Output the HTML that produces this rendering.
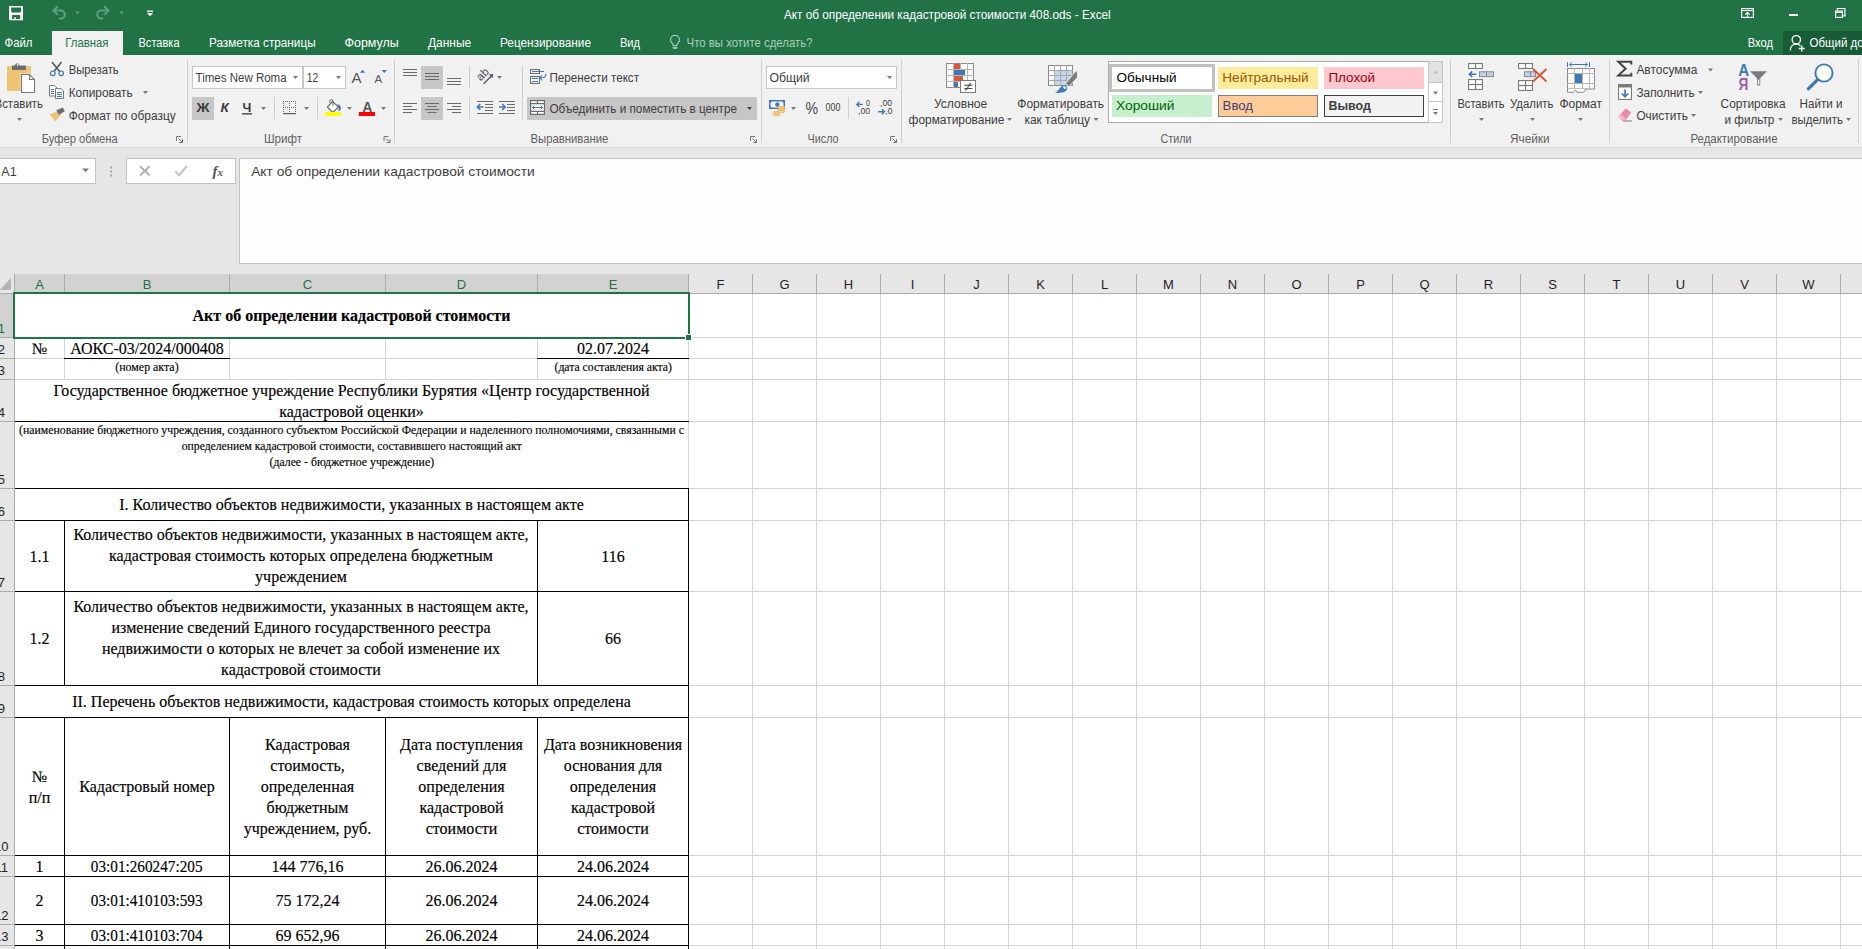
<!DOCTYPE html>
<html><head><meta charset="utf-8"><title>Excel</title>
<style>
html,body{margin:0;padding:0;background:#e6e6e6;}
body{width:1862px;height:949px;overflow:hidden;position:relative;font-family:"Liberation Sans",sans-serif;}
.c{font-family:"Liberation Serif",serif;color:#000;overflow:visible;-webkit-text-stroke:0.15px #000;}
svg{position:absolute;left:0;top:0;}
svg text{white-space:pre;}
</style></head><body>
<svg width="1862" height="949" viewBox="0 0 1862 949">
<rect x="0" y="0" width="1862" height="55" fill="#217346" />
<rect x="52" y="31" width="71" height="24" fill="#f1f1f1" />
<rect x="1783" y="31" width="80" height="24" fill="#185c37" />
<path d="M9 6.6a.6 .6 0 0 1 .6-.6h12.8a.6 .6 0 0 1 .6 .6v13.1a.6 .6 0 0 1 -.6 .6h-12.8a.6 .6 0 0 1 -.6-.6z" fill="#ffffff" />
<path d="M11.2 7.4h9.8v4l-1 1.1h-7.8l-1-1.1z" fill="#217346" />
<rect x="12.2" y="15" width="8" height="4" fill="#217346" />
<rect x="14.3" y="17.2" width="1.5" height="1.8" fill="#ffffff" />
<path d="M53.5 10.6 h7.3 a4 4 0 0 1 0 8 h-1.2" fill="none" stroke="#5e9f7c" stroke-width="2" stroke-linecap="round"/>
<path d="M57.3 6.8 l-3.9 3.8 l3.9 3.8" fill="none" stroke="#5e9f7c" stroke-width="2" stroke-linecap="round" stroke-linejoin="round"/>
<path d="M75 11.5h5l-2.5 3z" fill="#5e9f7c" />
<path d="M108.5 10.6 h-7.3 a4 4 0 0 0 0 8 h1.2" fill="none" stroke="#5e9f7c" stroke-width="2" stroke-linecap="round"/>
<path d="M104.7 6.8 l3.9 3.8 l-3.9 3.8" fill="none" stroke="#5e9f7c" stroke-width="2" stroke-linecap="round" stroke-linejoin="round"/>
<path d="M119 11.5h5l-2.5 3z" fill="#5e9f7c" />
<rect x="147" y="10.5" width="6" height="1.3" fill="#ffffff" />
<path d="M146.8 13 h6.4 l-3.2 3.2z" fill="#ffffff" />
<text x="783.9" y="19" font-family="Liberation Sans" font-size="12" fill="#ffffff" textLength="326.8" lengthAdjust="spacingAndGlyphs">Акт об определении кадастровой стоимости 408.ods - Excel</text>
<rect x="1741.6" y="8.6" width="11.8" height="8.8" fill="none" stroke="#ffffff" stroke-width="1.2" />
<path d="M1741.5 10.6h12" fill="none" stroke="#ffffff" stroke-width="1" />
<path d="M1747.5 17v-4.5 M1745.3 14.5l2.2-2.2l2.2 2.2" fill="none" stroke="#ffffff" stroke-width="1.1" />
<rect x="1789" y="14" width="9" height="2" fill="#ffffff" />
<rect x="1835.6" y="11.1" width="6.8" height="6.3" fill="none" stroke="#ffffff" stroke-width="1.2" />
<path d="M1837.3 10.5v-2h7.6v7.3h-2" fill="none" stroke="#ffffff" stroke-width="1.2" />
<path d="M1835.5 12.4h7" fill="none" stroke="#ffffff" stroke-width="1" />
<text x="4.5" y="47" font-family="Liberation Sans" font-size="12" fill="#ffffff" textLength="28" lengthAdjust="spacingAndGlyphs">Файл</text>
<text x="65.3" y="47" font-family="Liberation Sans" font-size="12" fill="#217346" textLength="43.2" lengthAdjust="spacingAndGlyphs">Главная</text>
<text x="138.5" y="47" font-family="Liberation Sans" font-size="12" fill="#ffffff" textLength="41.1" lengthAdjust="spacingAndGlyphs">Вставка</text>
<text x="209" y="47" font-family="Liberation Sans" font-size="12" fill="#ffffff" textLength="106.6" lengthAdjust="spacingAndGlyphs">Разметка страницы</text>
<text x="344.6" y="47" font-family="Liberation Sans" font-size="12" fill="#ffffff" textLength="54" lengthAdjust="spacingAndGlyphs">Формулы</text>
<text x="427.9" y="47" font-family="Liberation Sans" font-size="12" fill="#ffffff" textLength="43.3" lengthAdjust="spacingAndGlyphs">Данные</text>
<text x="500" y="47" font-family="Liberation Sans" font-size="12" fill="#ffffff" textLength="91" lengthAdjust="spacingAndGlyphs">Рецензирование</text>
<text x="620" y="47" font-family="Liberation Sans" font-size="12" fill="#ffffff" textLength="20" lengthAdjust="spacingAndGlyphs">Вид</text>
<path d="M675 35.4a4.5 4.5 0 0 1 4.5 4.5c0 2.2-2.7 3.4-2.7 5.7h-3.6c0-2.3-2.7-3.5-2.7-5.7a4.5 4.5 0 0 1 4.5-4.5z" fill="none" stroke="#9fc8b1" stroke-width="1.2" />
<path d="M672.4 47h5.2l-.8 2h-3.6z" fill="#9fc8b1" />
<text x="686.6" y="47" font-family="Liberation Sans" font-size="12" fill="#a9cfba" textLength="125.9" lengthAdjust="spacingAndGlyphs">Что вы хотите сделать?</text>
<text x="1747.7" y="47" font-family="Liberation Sans" font-size="12" fill="#ffffff" textLength="25.2" lengthAdjust="spacingAndGlyphs">Вход</text>
<circle cx="1796.3" cy="39.8" r="4.2" fill="none" stroke="#fff" stroke-width="1.3"/>
<path d="M1790.3 50.5c0-4 2.6-6.3 6-6.3c1.7 0 3.2 .6 4.2 1.6" fill="none" stroke="#ffffff" stroke-width="1.3" />
<path d="M1801.8 45.5v6 M1798.8 48.5h6" fill="none" stroke="#ffffff" stroke-width="1.3" />
<text x="1809.6" y="47" font-family="Liberation Sans" font-size="12" fill="#ffffff" textLength="77.0" lengthAdjust="spacingAndGlyphs">Общий доступ</text>
<rect x="0" y="55" width="1862" height="92" fill="#f1f1f1" />
<rect x="0" y="147" width="1862" height="1" fill="#d6d6d6" />
<rect x="187" y="59" width="1" height="84" fill="#d0d0d0" />
<rect x="394" y="59" width="1" height="84" fill="#d0d0d0" />
<rect x="522" y="66" width="1" height="54" fill="#d0d0d0" />
<rect x="761" y="59" width="1" height="84" fill="#d0d0d0" />
<rect x="901" y="59" width="1" height="84" fill="#d0d0d0" />
<rect x="1450" y="59" width="1" height="84" fill="#d0d0d0" />
<rect x="1609" y="59" width="1" height="84" fill="#d0d0d0" />
<rect x="1858" y="59" width="1" height="84" fill="#d0d0d0" />
<rect x="7" y="66" width="24" height="25" fill="#ecc476" />
<path d="M12 70v-4.4h3a2.2 2.2 0 0 1 4.4 0h6.4v4.4z" fill="#6e6e6e" />
<path d="M12 66h4v-1a1.6 1.6 0 0 1 3.2 0v1h6.6v4h-13.8z" fill="#6e6e6e" />
<circle cx="17.6" cy="65" r="0.9" fill="#f1f1f1"/>
<path d="M20.5 73.5h9.5l5.5 5.5v14.5h-15z" fill="#f1f1f1" />
<path d="M21.5 74.5h8l5 5v13h-13z" fill="#ffffff" stroke="#7a7a7a" stroke-width="1.1" />
<path d="M29.5 74.5v5h5" fill="none" stroke="#7a7a7a" stroke-width="1.1" />
<text x="-5.5" y="108" font-family="Liberation Sans" font-size="12" fill="#3d3d3d" textLength="48.5" lengthAdjust="spacingAndGlyphs">Вставить</text>
<path d="M17 118h5l-2.5 3z" fill="#777777" />
<path d="M52 62l9.5 12 M61.5 62l-9.5 12" fill="none" stroke="#555" stroke-width="1.5" />
<circle cx="52.8" cy="73.3" r="2.3" fill="#f1f1f1" stroke="#3e78b8" stroke-width="1.2"/>
<circle cx="61.2" cy="73.3" r="2.3" fill="#f1f1f1" stroke="#3e78b8" stroke-width="1.2"/>
<text x="68.7" y="74" font-family="Liberation Sans" font-size="12" fill="#3d3d3d" textLength="50" lengthAdjust="spacingAndGlyphs">Вырезать</text>
<path d="M49.5 85.5h5l2.5 2.5v8h-7.5z" fill="#fff" stroke="#777" stroke-width="1" />
<path d="M55.5 88.5h5.5l2.5 2.5v7.5h-8z" fill="#fff" stroke="#777" stroke-width="1" />
<rect x="51" y="89" width="3" height="1" fill="#3e78b8" />
<rect x="51" y="91" width="3" height="1" fill="#3e78b8" />
<rect x="51" y="93" width="3" height="1" fill="#3e78b8" />
<rect x="57" y="92" width="5" height="1" fill="#3e78b8" />
<rect x="57" y="94" width="5" height="1" fill="#3e78b8" />
<rect x="57" y="96" width="5" height="1" fill="#3e78b8" />
<text x="68.7" y="97" font-family="Liberation Sans" font-size="12" fill="#3d3d3d" textLength="64" lengthAdjust="spacingAndGlyphs">Копировать</text>
<path d="M143 91h5l-2.5 3z" fill="#777777" />
<path d="M49.5 114.5l8.5-3.5l3 3.5l-5.5 7z" fill="#ecc476" />
<path d="M56.3 110.2l6.5-2.7l2 3.7l-5.8 3.6z" fill="#6e6e6e" />
<text x="68.7" y="120" font-family="Liberation Sans" font-size="12" fill="#3d3d3d" textLength="107" lengthAdjust="spacingAndGlyphs">Формат по образцу</text>
<text x="41.7" y="143" font-family="Liberation Sans" font-size="12" fill="#5f5f5f" textLength="76" lengthAdjust="spacingAndGlyphs">Буфер обмена</text>
<path d="M176.5 141v-4.5h4.5" fill="none" stroke="#777" stroke-width="1" />
<path d="M178.5 138.5l4 4 M182.5 139.2v3.3h-3.3" fill="none" stroke="#777" stroke-width="1" />
<rect x="192.5" y="66.5" width="110" height="22" fill="#fff" stroke="#c6c6c6" stroke-width="1" />
<rect x="303.5" y="66.5" width="42" height="22" fill="#fff" stroke="#c6c6c6" stroke-width="1" />
<text x="195.6" y="82" font-family="Liberation Sans" font-size="12" fill="#3d3d3d" textLength="91" lengthAdjust="spacingAndGlyphs">Times New Roma</text>
<path d="M293 76h5l-2.5 3z" fill="#777777" />
<text x="306.7" y="82" font-family="Liberation Sans" font-size="12" fill="#3d3d3d" textLength="11.5" lengthAdjust="spacingAndGlyphs">12</text>
<path d="M336 76h5l-2.5 3z" fill="#777777" />
<text x="351.6" y="83" font-family="Liberation Sans" font-size="14.5" fill="#555" textLength="10" lengthAdjust="spacingAndGlyphs">A</text>
<path d="M359.8 72.7l2.7-2.9l2.7 2.9z" fill="#3e78b8" />
<text x="374.6" y="83" font-family="Liberation Sans" font-size="11" fill="#555" textLength="7.6" lengthAdjust="spacingAndGlyphs">A</text>
<path d="M381.6 70l2.7 2.9l2.7-2.9z" fill="#3e78b8" />
<rect x="192" y="97" width="22" height="23" fill="#c6c6c6" />
<text x="196.6" y="112" font-family="Liberation Sans" font-size="13" fill="#3b3b3b" font-weight="bold" textLength="13" lengthAdjust="spacingAndGlyphs">Ж</text>
<text x="220.4" y="112" font-family="Liberation Sans" font-size="13" fill="#3b3b3b" font-weight="bold" font-style="italic" textLength="8.3" lengthAdjust="spacingAndGlyphs">К</text>
<text x="242.6" y="112" font-family="Liberation Sans" font-size="13" fill="#3b3b3b" font-weight="bold" textLength="8.8" lengthAdjust="spacingAndGlyphs">Ч</text>
<rect x="242" y="113.2" width="10" height="1.3" fill="#3b3b3b" />
<path d="M261 107h5l-2.5 3z" fill="#777777" />
<rect x="274" y="97" width="1" height="22" fill="#d0d0d0" />
<line x1="283.5" y1="101" x2="283.5" y2="112" stroke="#666" stroke-width="1" stroke-dasharray="1 1"/>
<line x1="289.5" y1="101" x2="289.5" y2="112" stroke="#666" stroke-width="1" stroke-dasharray="1 1"/>
<line x1="295.5" y1="101" x2="295.5" y2="112" stroke="#666" stroke-width="1" stroke-dasharray="1 1"/>
<line x1="283" y1="101.5" x2="296" y2="101.5" stroke="#666" stroke-width="1" stroke-dasharray="1 1"/>
<line x1="283" y1="107.5" x2="296" y2="107.5" stroke="#666" stroke-width="1" stroke-dasharray="1 1"/>
<rect x="283" y="113" width="13" height="1.2" fill="#5a5a5a" />
<path d="M304 107h5l-2.5 3z" fill="#777777" />
<rect x="317" y="97" width="1" height="22" fill="#d0d0d0" />
<path d="M337 103.9c2.8 .7 4.3 2.7 3.9 4.8c-.3 1.4-1.4 2.3-2.6 2.5c.9-2.2 .5-4.6-1.3-7.3z" fill="#3e78b8" />
<path d="M332.7 101.6l5.7 5.4l-5.7 5.4l-5.4-5.4z" fill="#fff" stroke="#666" stroke-width="1.1" />
<path d="M333 106.2v-5a1.6 1.6 0 0 0 -3.2 0v1.9" fill="none" stroke="#666" stroke-width="1" />
<rect x="325" y="112" width="16" height="4" fill="#ffff00" />
<path d="M347 107h5l-2.5 3z" fill="#777777" />
<text x="362.4" y="112" font-family="Liberation Sans" font-size="14" fill="#555" font-weight="bold" textLength="9.8" lengthAdjust="spacingAndGlyphs">A</text>
<rect x="359" y="112" width="16" height="4" fill="#ff0000" />
<path d="M381 107h5l-2.5 3z" fill="#777777" />
<text x="263.9" y="143" font-family="Liberation Sans" font-size="12" fill="#5f5f5f" textLength="38.1" lengthAdjust="spacingAndGlyphs">Шрифт</text>
<path d="M384.0 141v-4.5h4.5" fill="none" stroke="#777" stroke-width="1" />
<path d="M386.0 138.5l4 4 M390.0 139.2v3.3h-3.3" fill="none" stroke="#777" stroke-width="1" />
<rect x="403" y="69" width="14" height="1" fill="#6a6a6a" />
<rect x="403" y="72" width="14" height="1" fill="#6a6a6a" />
<rect x="403" y="75" width="14" height="1" fill="#6a6a6a" />
<rect x="421" y="66" width="22" height="23" fill="#c6c6c6" />
<rect x="425" y="73" width="14" height="1" fill="#6a6a6a" />
<rect x="425" y="76" width="14" height="1" fill="#6a6a6a" />
<rect x="425" y="79" width="14" height="1" fill="#6a6a6a" />
<rect x="447" y="78" width="14" height="1" fill="#6a6a6a" />
<rect x="447" y="81" width="14" height="1" fill="#6a6a6a" />
<rect x="447" y="84" width="14" height="1" fill="#6a6a6a" />
<rect x="469" y="66" width="1" height="22" fill="#d0d0d0" />
<text transform="translate(480.8,81.6) rotate(-45)" font-family="Liberation Sans" font-size="11.5" fill="#4a4a4a">ab</text>
<path d="M483.6 83.8l8.3-8.3" fill="none" stroke="#555" stroke-width="1.3" />
<path d="M493.2 74l-4.3 .6l3.7 3.7z" fill="#555" />
<path d="M497 76h5l-2.5 3z" fill="#777777" />
<rect x="530.55" y="69.55" width="8.9" height="3.9" fill="#fff" stroke="#6e6e6e" stroke-width="1.1" />
<rect x="530.55" y="76.55" width="8.9" height="6.9" fill="#fff" stroke="#6e6e6e" stroke-width="1.1" />
<rect x="532" y="71" width="12" height="1" fill="#3e78b8" />
<rect x="532" y="78" width="6" height="1" fill="#3e78b8" />
<rect x="532" y="81" width="6" height="1" fill="#3e78b8" />
<path d="M545.8 73.6c.4 2.6-1 4.2-3.6 4.2h-2 M542.2 75.3l-2.6 2.5l2.6 2.5" fill="none" stroke="#3e78b8" stroke-width="1.1" />
<text x="549.5" y="82" font-family="Liberation Sans" font-size="12" fill="#3d3d3d" textLength="89.5" lengthAdjust="spacingAndGlyphs">Перенести текст</text>
<rect x="403" y="103" width="14" height="1" fill="#6a6a6a" />
<rect x="403" y="106" width="9" height="1" fill="#6a6a6a" />
<rect x="403" y="109" width="14" height="1" fill="#6a6a6a" />
<rect x="403" y="112" width="9" height="1" fill="#6a6a6a" />
<rect x="421" y="97" width="22" height="23" fill="#c6c6c6" />
<rect x="425.0" y="103" width="14" height="1" fill="#6a6a6a" />
<rect x="427.5" y="106" width="9" height="1" fill="#6a6a6a" />
<rect x="425.0" y="109" width="14" height="1" fill="#6a6a6a" />
<rect x="427.5" y="112" width="9" height="1" fill="#6a6a6a" />
<rect x="447" y="103" width="14" height="1" fill="#6a6a6a" />
<rect x="452" y="106" width="9" height="1" fill="#6a6a6a" />
<rect x="447" y="109" width="14" height="1" fill="#6a6a6a" />
<rect x="452" y="112" width="9" height="1" fill="#6a6a6a" />
<rect x="469" y="97" width="1" height="22" fill="#d0d0d0" />
<rect x="477" y="101" width="16" height="1" fill="#6a6a6a" />
<rect x="477" y="113" width="16" height="1" fill="#6a6a6a" />
<rect x="485" y="104" width="8" height="1" fill="#6a6a6a" />
<rect x="485" y="107" width="8" height="1" fill="#6a6a6a" />
<rect x="485" y="110" width="8" height="1" fill="#6a6a6a" />
<path d="M483.5 107h-6 M480.3 104l-3 3l3 3" fill="none" stroke="#3e78b8" stroke-width="1.6" />
<rect x="499" y="101" width="16" height="1" fill="#6a6a6a" />
<rect x="499" y="113" width="16" height="1" fill="#6a6a6a" />
<rect x="507" y="104" width="8" height="1" fill="#6a6a6a" />
<rect x="507" y="107" width="8" height="1" fill="#6a6a6a" />
<rect x="507" y="110" width="8" height="1" fill="#6a6a6a" />
<path d="M499 107h6 M502.2 104l3 3l-3 3" fill="none" stroke="#3e78b8" stroke-width="1.6" />
<rect x="527" y="97" width="230" height="23" fill="#c6c6c6" />
<rect x="530.6" y="100.6" width="13.8" height="13.8" fill="#fff" stroke="#6a6a6a" stroke-width="1.2" />
<path d="M530.5 103.6h14 M530.5 111.4h14 M537.5 100.5v3 M537.5 111.5v3" fill="none" stroke="#6a6a6a" stroke-width="1.1" />
<path d="M532.5 107.5h10 M534.3 105.8l-1.8 1.7l1.8 1.7 M540.7 105.8l1.8 1.7l-1.8 1.7" fill="none" stroke="#3e78b8" stroke-width="1" />
<text x="549.5" y="113" font-family="Liberation Sans" font-size="12" fill="#3d3d3d" textLength="187.5" lengthAdjust="spacingAndGlyphs">Объединить и поместить в центре</text>
<path d="M747 107h5l-2.5 3z" fill="#444" />
<text x="530.6" y="143" font-family="Liberation Sans" font-size="12" fill="#5f5f5f" textLength="77.7" lengthAdjust="spacingAndGlyphs">Выравнивание</text>
<path d="M750.5 141v-4.5h4.5" fill="none" stroke="#777" stroke-width="1" />
<path d="M752.5 138.5l4 4 M756.5 139.2v3.3h-3.3" fill="none" stroke="#777" stroke-width="1" />
<rect x="766.5" y="66.5" width="130" height="22" fill="#fff" stroke="#c6c6c6" stroke-width="1" />
<text x="769.5" y="82" font-family="Liberation Sans" font-size="12" fill="#3d3d3d" textLength="40.2" lengthAdjust="spacingAndGlyphs">Общий</text>
<path d="M887 76h5l-2.5 3z" fill="#777777" />
<rect x="769" y="100" width="16" height="9" fill="#3e78b8" />
<rect x="770.5" y="101.5" width="13" height="6" fill="#fff" />
<circle cx="777.3" cy="104.5" r="2.2" fill="#3e78b8"/>
<rect x="769" y="100" width="2.5" height="2.5" fill="#3e78b8" />
<rect x="782.5" y="100" width="2.5" height="2.5" fill="#3e78b8" />
<rect x="769" y="106.5" width="2.5" height="2.5" fill="#3e78b8" />
<ellipse cx="781.4" cy="107.3" rx="3.6" ry="1.3" fill="#f3cf8a" stroke="#e0a94f" stroke-width="0.6"/>
<ellipse cx="781.4" cy="109.3" rx="3.6" ry="1.3" fill="#f3cf8a" stroke="#e0a94f" stroke-width="0.6"/>
<ellipse cx="781.4" cy="111.3" rx="3.6" ry="1.3" fill="#f3cf8a" stroke="#e0a94f" stroke-width="0.6"/>
<ellipse cx="776.6" cy="112.6" rx="3.6" ry="1.3" fill="#f3cf8a" stroke="#e0a94f" stroke-width="0.6"/>
<ellipse cx="776.6" cy="114.6" rx="3.6" ry="1.3" fill="#f3cf8a" stroke="#e0a94f" stroke-width="0.6"/>
<path d="M791 107h5l-2.5 3z" fill="#777777" />
<text x="805.4" y="114.2" font-family="Liberation Sans" font-size="16.5" fill="#4a4a4a" textLength="12.6" lengthAdjust="spacingAndGlyphs">%</text>
<text x="825.6" y="111" font-family="Liberation Sans" font-size="10.5" fill="#3d3d3d" textLength="14.7" lengthAdjust="spacingAndGlyphs">000</text>
<rect x="848" y="97" width="1" height="22" fill="#d0d0d0" />
<path d="M862.8 104.4h-6 M859.4 101.9l-2.6 2.5l2.6 2.5" fill="none" stroke="#3e78b8" stroke-width="1.4" />
<text x="866" y="106.3" font-family="Liberation Sans" font-size="8.5" fill="#3d3d3d" textLength="4" lengthAdjust="spacingAndGlyphs">0</text>
<text x="858" y="114.1" font-family="Liberation Sans" font-size="8.5" fill="#3d3d3d" textLength="12" lengthAdjust="spacingAndGlyphs">,00</text>
<text x="880" y="106.3" font-family="Liberation Sans" font-size="8.5" fill="#3d3d3d" textLength="12" lengthAdjust="spacingAndGlyphs">,00</text>
<path d="M878 111.7h6.5 M881.9 109.2l2.6 2.5l-2.6 2.5" fill="none" stroke="#3e78b8" stroke-width="1.4" />
<text x="885.3" y="114.1" font-family="Liberation Sans" font-size="8.5" fill="#3d3d3d" textLength="7" lengthAdjust="spacingAndGlyphs">,0</text>
<text x="807.6" y="143" font-family="Liberation Sans" font-size="12" fill="#5f5f5f" textLength="31" lengthAdjust="spacingAndGlyphs">Число</text>
<path d="M890.5 141v-4.5h4.5" fill="none" stroke="#777" stroke-width="1" />
<path d="M892.5 138.5l4 4 M896.5 139.2v3.3h-3.3" fill="none" stroke="#777" stroke-width="1" />
<rect x="946.5" y="63.5" width="27" height="24" fill="#fff" stroke="#8a8a8a" stroke-width="1" />
<rect x="953" y="63" width="1" height="25" fill="#b5b5b5" />
<rect x="960" y="63" width="1" height="25" fill="#b5b5b5" />
<rect x="967" y="63" width="1" height="25" fill="#b5b5b5" />
<rect x="946" y="69" width="28" height="1" fill="#b5b5b5" />
<rect x="946" y="75" width="28" height="1" fill="#b5b5b5" />
<rect x="946" y="81" width="28" height="1" fill="#b5b5b5" />
<rect x="954" y="64" width="6" height="5" fill="#d8583a" />
<rect x="954" y="70" width="11" height="5" fill="#3e78b8" />
<rect x="954" y="76" width="9" height="5" fill="#d8583a" />
<rect x="954" y="82" width="4" height="5" fill="#3e78b8" />
<rect x="960.5" y="80.5" width="15" height="12" fill="#fff" stroke="#7a7a7a" stroke-width="1" />
<text x="963.5" y="91" font-family="Liberation Sans" font-size="13" fill="#444" textLength="9" lengthAdjust="spacingAndGlyphs">≠</text>
<text x="934" y="108" font-family="Liberation Sans" font-size="12" fill="#3d3d3d" textLength="53.2" lengthAdjust="spacingAndGlyphs">Условное</text>
<text x="908.6" y="124" font-family="Liberation Sans" font-size="12" fill="#3d3d3d" textLength="95.7" lengthAdjust="spacingAndGlyphs">форматирование</text>
<path d="M1007 118h5l-2.5 3z" fill="#777777" />
<rect x="1048.5" y="65.5" width="24" height="20" fill="#fff" stroke="#8a8a8a" stroke-width="1" />
<rect x="1054" y="71" width="18" height="14" fill="#c3d6ee" />
<rect x="1054" y="65" width="1" height="21" fill="#a9a9a9" />
<rect x="1060" y="65" width="1" height="21" fill="#a9a9a9" />
<rect x="1066" y="65" width="1" height="21" fill="#a9a9a9" />
<rect x="1048" y="70" width="25" height="1" fill="#a9a9a9" />
<rect x="1048" y="75" width="25" height="1" fill="#a9a9a9" />
<rect x="1048" y="80" width="25" height="1" fill="#a9a9a9" />
<path d="M1065.5 83.5l9.5-11.5l2.3-1.3v6.8l-8.3 9.3z" fill="#7a7a7a" stroke="#f1f1f1" stroke-width="0.9" />
<path d="M1055 93c3.5-1.5 4.5-6 8-7.5c2.5-.8 5 1.5 4 4c-1 2.5-4 3.5-12 3.5z" fill="#3e78b8" />
<ellipse cx="1064.6" cy="87.6" rx="1.7" ry="1.1" fill="#fff" transform="rotate(35 1064.6 87.6)"/>
<text x="1017.3" y="108" font-family="Liberation Sans" font-size="12" fill="#3d3d3d" textLength="86.8" lengthAdjust="spacingAndGlyphs">Форматировать</text>
<text x="1024.4" y="124" font-family="Liberation Sans" font-size="12" fill="#3d3d3d" textLength="65.6" lengthAdjust="spacingAndGlyphs">как таблицу</text>
<path d="M1093.5 118h5l-2.5 3z" fill="#777777" />
<rect x="1108.5" y="61.5" width="334" height="61" fill="#fff" stroke="#ababab" stroke-width="1" />
<rect x="1109" y="64" width="106" height="28" fill="#c0c0c0" />
<rect x="1112" y="67" width="100" height="22" fill="#fff" />
<text x="1116.5" y="82" font-family="Liberation Sans" font-size="13" fill="#000" textLength="60" lengthAdjust="spacingAndGlyphs">Обычный</text>
<rect x="1218" y="67" width="100" height="22" fill="#ffeb9c" />
<text x="1222.3" y="82" font-family="Liberation Sans" font-size="13" fill="#9c5700" textLength="86.2" lengthAdjust="spacingAndGlyphs">Нейтральный</text>
<rect x="1324" y="67" width="100" height="22" fill="#ffc7ce" />
<text x="1328.4" y="82" font-family="Liberation Sans" font-size="13" fill="#9c0006" textLength="46.6" lengthAdjust="spacingAndGlyphs">Плохой</text>
<rect x="1112" y="95" width="100" height="22" fill="#c6efce" />
<text x="1116" y="110" font-family="Liberation Sans" font-size="13" fill="#006100" textLength="58.5" lengthAdjust="spacingAndGlyphs">Хороший</text>
<rect x="1218.5" y="95.5" width="99" height="21" fill="#ffcc99" stroke="#7f7f7f" stroke-width="1" />
<text x="1222.6" y="110" font-family="Liberation Sans" font-size="13" fill="#3f3f76" textLength="30.4" lengthAdjust="spacingAndGlyphs">Ввод</text>
<rect x="1324.5" y="95.5" width="99" height="21" fill="#f2f2f2" stroke="#3f3f3f" stroke-width="1" />
<text x="1328.4" y="110" font-family="Liberation Sans" font-size="13" fill="#3f3f3f" font-weight="bold" textLength="42.5" lengthAdjust="spacingAndGlyphs">Вывод</text>
<rect x="1428.5" y="61.5" width="14" height="21" fill="#e1e1e1" stroke="#c6c6c6" stroke-width="1" />
<rect x="1428.5" y="82.5" width="14" height="19" fill="#fff" stroke="#c6c6c6" stroke-width="1" />
<rect x="1428.5" y="101.5" width="14" height="21" fill="#fff" stroke="#c6c6c6" stroke-width="1" />
<path d="M1433 73.5l2.5-3l2.5 3z" fill="#c0c0c0" />
<path d="M1433 91.5l2.5 3l2.5-3z" fill="#777" />
<rect x="1433" y="109" width="5" height="1" fill="#777" />
<path d="M1433 112l2.5 3l2.5-3z" fill="#777" />
<text x="1160.5" y="143" font-family="Liberation Sans" font-size="12" fill="#5f5f5f" textLength="31.1" lengthAdjust="spacingAndGlyphs">Стили</text>
<rect x="1468.55" y="63.55" width="13.9" height="4.9" fill="#fff" stroke="#7a7a7a" stroke-width="1.1" />
<rect x="1475.0" y="63" width="1.1" height="6" fill="#7a7a7a" />
<path d="M1476.3 74.2h-6.5 M1472.2 71.4l-2.8 2.8l2.8 2.8" fill="none" stroke="#3e78b8" stroke-width="1.6" />
<rect x="1479.5" y="71.8" width="14" height="4.8" fill="#bdd3ea" stroke="#8a8a8a" stroke-width="1" />
<rect x="1486" y="71.3" width="1" height="5.8" fill="#8a8a8a" />
<rect x="1468.55" y="79.55" width="13.9" height="9.9" fill="#fff" stroke="#7a7a7a" stroke-width="1.1" />
<rect x="1475.0" y="79" width="1.1" height="11" fill="#7a7a7a" />
<rect x="1468" y="84.0" width="15" height="1.1" fill="#7a7a7a" />
<text x="1457.4" y="108" font-family="Liberation Sans" font-size="12" fill="#3d3d3d" textLength="47.2" lengthAdjust="spacingAndGlyphs">Вставить</text>
<path d="M1479 118h5l-2.5 3z" fill="#777777" />
<rect x="1518.55" y="63.55" width="13.9" height="4.9" fill="#fff" stroke="#7a7a7a" stroke-width="1.1" />
<rect x="1525.0" y="63" width="1.1" height="6" fill="#7a7a7a" />
<rect x="1524.5" y="71.8" width="11" height="4.8" fill="#bdd3ea" stroke="#8a8a8a" stroke-width="1" />
<rect x="1530" y="71.3" width="1" height="5.8" fill="#8a8a8a" />
<rect x="1518.55" y="80.55" width="13.9" height="9.9" fill="#fff" stroke="#7a7a7a" stroke-width="1.1" />
<rect x="1525.0" y="80" width="1.1" height="11" fill="#7a7a7a" />
<rect x="1518" y="85.0" width="15" height="1.1" fill="#7a7a7a" />
<path d="M1533 69l13.5 12.5 M1546.5 69l-13.5 12.5" fill="none" stroke="#d8583a" stroke-width="2" />
<text x="1510" y="108" font-family="Liberation Sans" font-size="12" fill="#3d3d3d" textLength="43.5" lengthAdjust="spacingAndGlyphs">Удалить</text>
<path d="M1530 118h5l-2.5 3z" fill="#777777" />
<path d="M1567.5 62v5 M1589.5 62v5 M1569.5 64.5h18 M1571.8 62.5l-2.2 2l2.2 2 M1585.2 62.5l2.2 2l-2.2 2" fill="none" stroke="#3e78b8" stroke-width="1" />
<rect x="1567.5" y="68.5" width="27" height="20.5" fill="#fff" stroke="#8a8a8a" stroke-width="1" />
<rect x="1574" y="68" width="1" height="21" fill="#b5b5b5" />
<rect x="1582" y="68" width="1" height="21" fill="#b5b5b5" />
<rect x="1589" y="68" width="1" height="21" fill="#b5b5b5" />
<rect x="1567" y="73" width="28" height="1" fill="#b5b5b5" />
<rect x="1567" y="83" width="28" height="1" fill="#b5b5b5" />
<rect x="1575" y="74" width="7" height="9" fill="#3e78b8" />
<path d="M1567.5 89v3.3h6l1.5-1.8h1l1 1.8h6.5l2.5-3.3" fill="#fff" stroke="#8a8a8a" stroke-width="1" />
<text x="1559.4" y="108" font-family="Liberation Sans" font-size="12" fill="#3d3d3d" textLength="42.5" lengthAdjust="spacingAndGlyphs">Формат</text>
<path d="M1578 118h5l-2.5 3z" fill="#777777" />
<text x="1510" y="143" font-family="Liberation Sans" font-size="12" fill="#5f5f5f" textLength="39.6" lengthAdjust="spacingAndGlyphs">Ячейки</text>
<path d="M1631.3 64.6v-2.8h-13l7.3 6.9l-7.3 6.9h13v-2.8" fill="none" stroke="#444" stroke-width="2" stroke-linejoin="miter"/>
<text x="1636.4" y="74" font-family="Liberation Sans" font-size="12" fill="#3d3d3d" textLength="60.9" lengthAdjust="spacingAndGlyphs">Автосумма</text>
<path d="M1708 68.5h5l-2.5 3z" fill="#777777" />
<rect x="1618.55" y="84.55" width="12.9" height="14.9" fill="#fff" stroke="#7a7a7a" stroke-width="1.1" />
<rect x="1618" y="84" width="14" height="3.5" fill="#7a7a7a" />
<path d="M1625 89.5v7 M1621.8 93.5l3.2 3.2l3.2-3.2" fill="none" stroke="#3e78b8" stroke-width="1.7" />
<text x="1636.4" y="97" font-family="Liberation Sans" font-size="12" fill="#3d3d3d" textLength="58.2" lengthAdjust="spacingAndGlyphs">Заполнить</text>
<path d="M1698 91h5l-2.5 3z" fill="#777777" />
<path d="M1618.3 116.5l7.5-8l5.5 4l-6 8h-3.5z" fill="#e98aa0" />
<path d="M1618.3 116.5l2.2-2.4l5 4.5l-1.7 2.1h-2z" fill="#f4b9c6" />
<rect x="1623" y="120.5" width="9" height="1" fill="#7a7a7a" />
<text x="1636.4" y="120" font-family="Liberation Sans" font-size="12" fill="#3d3d3d" textLength="51.4" lengthAdjust="spacingAndGlyphs">Очистить</text>
<path d="M1691 114h5l-2.5 3z" fill="#777777" />
<text x="1738.2" y="75.9" font-family="Liberation Sans" font-size="16.5" fill="#3e78b8" font-weight="bold" textLength="10.9" lengthAdjust="spacingAndGlyphs">А</text>
<text x="1738.6" y="90.1" font-family="Liberation Sans" font-size="16.5" fill="#9b59b6" font-weight="bold" textLength="9.8" lengthAdjust="spacingAndGlyphs">Я</text>
<path d="M1750 71.3h17l-6.8 7v7.2h-3.2v-7.2z" fill="#7a7a7a" />
<rect x="1757.8" y="79.5" width="1.6" height="5" fill="#f1f1f1" />
<text x="1720.6" y="108" font-family="Liberation Sans" font-size="12" fill="#3d3d3d" textLength="64.9" lengthAdjust="spacingAndGlyphs">Сортировка</text>
<text x="1724.5" y="124" font-family="Liberation Sans" font-size="12" fill="#3d3d3d" textLength="49.8" lengthAdjust="spacingAndGlyphs">и фильтр</text>
<path d="M1778 118h5l-2.5 3z" fill="#777777" />
<circle cx="1824" cy="73" r="8.6" fill="#fff" stroke="#3e78b8" stroke-width="1.9"/>
<path d="M1817.6 79.6l-9.3 9.3" fill="none" stroke="#3e78b8" stroke-width="3.2" stroke-linecap="round"/>
<text x="1799.5" y="108" font-family="Liberation Sans" font-size="12" fill="#3d3d3d" textLength="43" lengthAdjust="spacingAndGlyphs">Найти и</text>
<text x="1791.5" y="124" font-family="Liberation Sans" font-size="12" fill="#3d3d3d" textLength="51.4" lengthAdjust="spacingAndGlyphs">выделить</text>
<path d="M1846 118h5l-2.5 3z" fill="#777777" />
<text x="1690.4" y="143" font-family="Liberation Sans" font-size="12" fill="#5f5f5f" textLength="87.2" lengthAdjust="spacingAndGlyphs">Редактирование</text>
<rect x="0" y="148" width="1862" height="126" fill="#e6e6e6" />
<rect x="-1.5" y="158.5" width="97" height="25" fill="#fff" stroke="#c3c3c3" stroke-width="1" />
<text x="1.3" y="176" font-family="Liberation Sans" font-size="13" fill="#3d3d3d" textLength="15.3" lengthAdjust="spacingAndGlyphs">A1</text>
<path d="M82 168.5h7l-3.5 3.6z" fill="#777" />
<rect x="110" y="166.5" width="2" height="2" fill="#a8a8a8" />
<rect x="110" y="170.5" width="2" height="2" fill="#a8a8a8" />
<rect x="110" y="174.5" width="2" height="2" fill="#a8a8a8" />
<rect x="126.5" y="158.5" width="109" height="25" fill="#fff" stroke="#c3c3c3" stroke-width="1" />
<path d="M140 166.3l9.6 9.2 M149.6 166.3l-9.6 9.2" fill="none" stroke="#b0b0b0" stroke-width="1.9" />
<path d="M175.3 171.3l3.7 4l8-9.3" fill="none" stroke="#c6c6c6" stroke-width="2.3" />
<text x="212.5" y="175.5" font-family="Liberation Serif" font-size="14" fill="#555" font-weight="bold" font-style="italic" textLength="5" lengthAdjust="spacingAndGlyphs">f</text>
<text x="217.5" y="176" font-family="Liberation Serif" font-size="10" fill="#555" font-weight="bold" font-style="italic" textLength="5.5" lengthAdjust="spacingAndGlyphs">x</text>
<rect x="239.5" y="158.5" width="1624" height="105" fill="#fdfdfd" stroke="#c3c3c3" stroke-width="1" />
<text x="251.2" y="176" font-family="Liberation Sans" font-size="13" fill="#3d3d3d" textLength="283.5" lengthAdjust="spacingAndGlyphs">Акт об определении кадастровой стоимости</text>
<rect x="0" y="274" width="1862" height="20" fill="#e6e6e6" />
<path d="M11 278v12h-11.5z" fill="#b4b4b4" />
<rect x="14" y="274" width="675" height="19" fill="#d2d2d2" />
<text x="39.5" y="289" font-family="Liberation Sans" font-size="13" fill="#217346" text-anchor="middle">A</text>
<text x="147.0" y="289" font-family="Liberation Sans" font-size="13" fill="#217346" text-anchor="middle">B</text>
<text x="307.5" y="289" font-family="Liberation Sans" font-size="13" fill="#217346" text-anchor="middle">C</text>
<text x="461.5" y="289" font-family="Liberation Sans" font-size="13" fill="#217346" text-anchor="middle">D</text>
<text x="613.0" y="289" font-family="Liberation Sans" font-size="13" fill="#217346" text-anchor="middle">E</text>
<text x="720.5" y="289" font-family="Liberation Sans" font-size="13" fill="#1f1f1f" text-anchor="middle">F</text>
<text x="784.5" y="289" font-family="Liberation Sans" font-size="13" fill="#1f1f1f" text-anchor="middle">G</text>
<text x="848.5" y="289" font-family="Liberation Sans" font-size="13" fill="#1f1f1f" text-anchor="middle">H</text>
<text x="912.5" y="289" font-family="Liberation Sans" font-size="13" fill="#1f1f1f" text-anchor="middle">I</text>
<text x="976.5" y="289" font-family="Liberation Sans" font-size="13" fill="#1f1f1f" text-anchor="middle">J</text>
<text x="1040.5" y="289" font-family="Liberation Sans" font-size="13" fill="#1f1f1f" text-anchor="middle">K</text>
<text x="1104.5" y="289" font-family="Liberation Sans" font-size="13" fill="#1f1f1f" text-anchor="middle">L</text>
<text x="1168.5" y="289" font-family="Liberation Sans" font-size="13" fill="#1f1f1f" text-anchor="middle">M</text>
<text x="1232.5" y="289" font-family="Liberation Sans" font-size="13" fill="#1f1f1f" text-anchor="middle">N</text>
<text x="1296.5" y="289" font-family="Liberation Sans" font-size="13" fill="#1f1f1f" text-anchor="middle">O</text>
<text x="1360.5" y="289" font-family="Liberation Sans" font-size="13" fill="#1f1f1f" text-anchor="middle">P</text>
<text x="1424.5" y="289" font-family="Liberation Sans" font-size="13" fill="#1f1f1f" text-anchor="middle">Q</text>
<text x="1488.5" y="289" font-family="Liberation Sans" font-size="13" fill="#1f1f1f" text-anchor="middle">R</text>
<text x="1552.5" y="289" font-family="Liberation Sans" font-size="13" fill="#1f1f1f" text-anchor="middle">S</text>
<text x="1616.5" y="289" font-family="Liberation Sans" font-size="13" fill="#1f1f1f" text-anchor="middle">T</text>
<text x="1680.5" y="289" font-family="Liberation Sans" font-size="13" fill="#1f1f1f" text-anchor="middle">U</text>
<text x="1744.5" y="289" font-family="Liberation Sans" font-size="13" fill="#1f1f1f" text-anchor="middle">V</text>
<text x="1808.5" y="289" font-family="Liberation Sans" font-size="13" fill="#1f1f1f" text-anchor="middle">W</text>
<rect x="14" y="274" width="1" height="19" fill="#ababab" />
<rect x="64" y="274" width="1" height="19" fill="#ababab" />
<rect x="229" y="274" width="1" height="19" fill="#ababab" />
<rect x="385" y="274" width="1" height="19" fill="#ababab" />
<rect x="537" y="274" width="1" height="19" fill="#ababab" />
<rect x="688" y="274" width="1" height="19" fill="#ababab" />
<rect x="752" y="274" width="1" height="19" fill="#ababab" />
<rect x="816" y="274" width="1" height="19" fill="#ababab" />
<rect x="880" y="274" width="1" height="19" fill="#ababab" />
<rect x="944" y="274" width="1" height="19" fill="#ababab" />
<rect x="1008" y="274" width="1" height="19" fill="#ababab" />
<rect x="1072" y="274" width="1" height="19" fill="#ababab" />
<rect x="1136" y="274" width="1" height="19" fill="#ababab" />
<rect x="1200" y="274" width="1" height="19" fill="#ababab" />
<rect x="1264" y="274" width="1" height="19" fill="#ababab" />
<rect x="1328" y="274" width="1" height="19" fill="#ababab" />
<rect x="1392" y="274" width="1" height="19" fill="#ababab" />
<rect x="1456" y="274" width="1" height="19" fill="#ababab" />
<rect x="1520" y="274" width="1" height="19" fill="#ababab" />
<rect x="1584" y="274" width="1" height="19" fill="#ababab" />
<rect x="1648" y="274" width="1" height="19" fill="#ababab" />
<rect x="1712" y="274" width="1" height="19" fill="#ababab" />
<rect x="1776" y="274" width="1" height="19" fill="#ababab" />
<rect x="1840" y="274" width="1" height="19" fill="#ababab" />
<rect x="689" y="293" width="1173" height="1" fill="#ababab" />
<rect x="0" y="294" width="14" height="655" fill="#e6e6e6" />
<rect x="0" y="294" width="14" height="44" fill="#d2d2d2" />
<rect x="14" y="294" width="1" height="655" fill="#ababab" />
<rect x="0" y="337" width="14" height="1" fill="#ababab" />
<text x="1.3" y="333" font-family="Liberation Sans" font-size="13" fill="#217346" text-anchor="middle">1</text>
<rect x="0" y="358" width="14" height="1" fill="#ababab" />
<text x="1.3" y="354" font-family="Liberation Sans" font-size="13" fill="#1f1f1f" text-anchor="middle">2</text>
<rect x="0" y="379" width="14" height="1" fill="#ababab" />
<text x="1.3" y="375" font-family="Liberation Sans" font-size="13" fill="#1f1f1f" text-anchor="middle">3</text>
<rect x="0" y="421" width="14" height="1" fill="#ababab" />
<text x="1.3" y="417" font-family="Liberation Sans" font-size="13" fill="#1f1f1f" text-anchor="middle">4</text>
<rect x="0" y="488" width="14" height="1" fill="#ababab" />
<text x="1.3" y="484" font-family="Liberation Sans" font-size="13" fill="#1f1f1f" text-anchor="middle">5</text>
<rect x="0" y="520" width="14" height="1" fill="#ababab" />
<text x="1.3" y="516" font-family="Liberation Sans" font-size="13" fill="#1f1f1f" text-anchor="middle">6</text>
<rect x="0" y="591" width="14" height="1" fill="#ababab" />
<text x="1.3" y="587" font-family="Liberation Sans" font-size="13" fill="#1f1f1f" text-anchor="middle">7</text>
<rect x="0" y="685" width="14" height="1" fill="#ababab" />
<text x="1.3" y="681" font-family="Liberation Sans" font-size="13" fill="#1f1f1f" text-anchor="middle">8</text>
<rect x="0" y="717" width="14" height="1" fill="#ababab" />
<text x="1.3" y="713" font-family="Liberation Sans" font-size="13" fill="#1f1f1f" text-anchor="middle">9</text>
<rect x="0" y="855" width="14" height="1" fill="#ababab" />
<text x="1.3" y="851" font-family="Liberation Sans" font-size="13" fill="#1f1f1f" text-anchor="middle">10</text>
<rect x="0" y="876" width="14" height="1" fill="#ababab" />
<text x="1.3" y="872" font-family="Liberation Sans" font-size="13" fill="#1f1f1f" text-anchor="middle">11</text>
<rect x="0" y="924" width="14" height="1" fill="#ababab" />
<text x="1.3" y="920" font-family="Liberation Sans" font-size="13" fill="#1f1f1f" text-anchor="middle">12</text>
<rect x="0" y="945" width="14" height="1" fill="#ababab" />
<text x="1.3" y="941" font-family="Liberation Sans" font-size="13" fill="#1f1f1f" text-anchor="middle">13</text>
<rect x="0" y="293" width="14" height="1" fill="#ababab" />
</svg>
<div style="position:absolute;left:15px;top:294px;width:1847px;height:655px;background:#fff"></div>
<div style="position:absolute;left:752px;top:294px;width:1px;height:655px;background:#d4d4d4"></div>
<div style="position:absolute;left:816px;top:294px;width:1px;height:655px;background:#d4d4d4"></div>
<div style="position:absolute;left:880px;top:294px;width:1px;height:655px;background:#d4d4d4"></div>
<div style="position:absolute;left:944px;top:294px;width:1px;height:655px;background:#d4d4d4"></div>
<div style="position:absolute;left:1008px;top:294px;width:1px;height:655px;background:#d4d4d4"></div>
<div style="position:absolute;left:1072px;top:294px;width:1px;height:655px;background:#d4d4d4"></div>
<div style="position:absolute;left:1136px;top:294px;width:1px;height:655px;background:#d4d4d4"></div>
<div style="position:absolute;left:1200px;top:294px;width:1px;height:655px;background:#d4d4d4"></div>
<div style="position:absolute;left:1264px;top:294px;width:1px;height:655px;background:#d4d4d4"></div>
<div style="position:absolute;left:1328px;top:294px;width:1px;height:655px;background:#d4d4d4"></div>
<div style="position:absolute;left:1392px;top:294px;width:1px;height:655px;background:#d4d4d4"></div>
<div style="position:absolute;left:1456px;top:294px;width:1px;height:655px;background:#d4d4d4"></div>
<div style="position:absolute;left:1520px;top:294px;width:1px;height:655px;background:#d4d4d4"></div>
<div style="position:absolute;left:1584px;top:294px;width:1px;height:655px;background:#d4d4d4"></div>
<div style="position:absolute;left:1648px;top:294px;width:1px;height:655px;background:#d4d4d4"></div>
<div style="position:absolute;left:1712px;top:294px;width:1px;height:655px;background:#d4d4d4"></div>
<div style="position:absolute;left:1776px;top:294px;width:1px;height:655px;background:#d4d4d4"></div>
<div style="position:absolute;left:1840px;top:294px;width:1px;height:655px;background:#d4d4d4"></div>
<div style="position:absolute;left:689px;top:337px;width:1173px;height:1px;background:#d4d4d4"></div>
<div style="position:absolute;left:689px;top:358px;width:1173px;height:1px;background:#d4d4d4"></div>
<div style="position:absolute;left:689px;top:379px;width:1173px;height:1px;background:#d4d4d4"></div>
<div style="position:absolute;left:689px;top:421px;width:1173px;height:1px;background:#d4d4d4"></div>
<div style="position:absolute;left:689px;top:488px;width:1173px;height:1px;background:#d4d4d4"></div>
<div style="position:absolute;left:689px;top:520px;width:1173px;height:1px;background:#d4d4d4"></div>
<div style="position:absolute;left:689px;top:591px;width:1173px;height:1px;background:#d4d4d4"></div>
<div style="position:absolute;left:689px;top:685px;width:1173px;height:1px;background:#d4d4d4"></div>
<div style="position:absolute;left:689px;top:717px;width:1173px;height:1px;background:#d4d4d4"></div>
<div style="position:absolute;left:689px;top:855px;width:1173px;height:1px;background:#d4d4d4"></div>
<div style="position:absolute;left:689px;top:876px;width:1173px;height:1px;background:#d4d4d4"></div>
<div style="position:absolute;left:689px;top:924px;width:1173px;height:1px;background:#d4d4d4"></div>
<div style="position:absolute;left:689px;top:945px;width:1173px;height:1px;background:#d4d4d4"></div>
<div style="position:absolute;left:688px;top:339px;width:1px;height:149px;background:#d4d4d4"></div>
<div style="position:absolute;left:64px;top:339px;width:1px;height:41px;background:#d4d4d4"></div>
<div style="position:absolute;left:229px;top:339px;width:1px;height:41px;background:#d4d4d4"></div>
<div style="position:absolute;left:385px;top:339px;width:1px;height:41px;background:#d4d4d4"></div>
<div style="position:absolute;left:537px;top:339px;width:1px;height:41px;background:#d4d4d4"></div>
<div style="position:absolute;left:15px;top:358px;width:673px;height:1px;background:#d4d4d4"></div>
<div style="position:absolute;left:15px;top:379px;width:674px;height:1px;background:#d4d4d4"></div>
<div style="position:absolute;left:64px;top:358px;width:166px;height:1px;background:#000"></div>
<div style="position:absolute;left:537px;top:358px;width:152px;height:1px;background:#000"></div>
<div style="position:absolute;left:15px;top:421px;width:674px;height:1px;background:#000"></div>
<div style="position:absolute;left:15px;top:488px;width:674px;height:1px;background:#000"></div>
<div style="position:absolute;left:15px;top:520px;width:674px;height:1px;background:#000"></div>
<div style="position:absolute;left:15px;top:591px;width:674px;height:1px;background:#000"></div>
<div style="position:absolute;left:15px;top:685px;width:674px;height:1px;background:#000"></div>
<div style="position:absolute;left:15px;top:717px;width:674px;height:1px;background:#000"></div>
<div style="position:absolute;left:15px;top:855px;width:674px;height:1px;background:#000"></div>
<div style="position:absolute;left:15px;top:876px;width:674px;height:1px;background:#000"></div>
<div style="position:absolute;left:15px;top:924px;width:674px;height:1px;background:#000"></div>
<div style="position:absolute;left:15px;top:945px;width:674px;height:1px;background:#000"></div>
<div style="position:absolute;left:688px;top:488px;width:1px;height:461px;background:#000"></div>
<div style="position:absolute;left:64px;top:520px;width:1px;height:166px;background:#000"></div>
<div style="position:absolute;left:537px;top:520px;width:1px;height:166px;background:#000"></div>
<div style="position:absolute;left:64px;top:717px;width:1px;height:232px;background:#000"></div>
<div style="position:absolute;left:229px;top:717px;width:1px;height:232px;background:#000"></div>
<div style="position:absolute;left:385px;top:717px;width:1px;height:232px;background:#000"></div>
<div style="position:absolute;left:537px;top:717px;width:1px;height:232px;background:#000"></div>
<div class="c" style="position:absolute;left:15px;top:294px;width:673px;height:43px;display:flex;flex-direction:column;justify-content:center;align-items:center;text-align:center;font-size:16px;line-height:21px;white-space:nowrap;font-weight:bold;"><div>Акт об определении кадастровой стоимости</div></div>
<div class="c" style="position:absolute;left:15px;top:339px;width:49px;height:19px;display:flex;flex-direction:column;justify-content:center;align-items:center;text-align:center;font-size:16px;line-height:21px;white-space:nowrap;"><div>№</div></div>
<div class="c" style="position:absolute;left:65px;top:339px;width:164px;height:19px;display:flex;flex-direction:column;justify-content:center;align-items:center;text-align:center;font-size:16px;line-height:21px;white-space:nowrap;"><div>АОКС-03/2024/000408</div></div>
<div class="c" style="position:absolute;left:538px;top:339px;width:150px;height:19px;display:flex;flex-direction:column;justify-content:center;align-items:center;text-align:center;font-size:16px;line-height:21px;white-space:nowrap;"><div>02.07.2024</div></div>
<div class="c" style="position:absolute;left:65px;top:359px;width:164px;height:20px;display:flex;flex-direction:column;justify-content:flex-start;align-items:center;text-align:center;font-size:12px;line-height:16px;white-space:nowrap;"><div><span style="display:inline-block;transform:scaleX(0.993);transform-origin:center">(номер акта)</span></div></div>
<div class="c" style="position:absolute;left:538px;top:359px;width:150px;height:20px;display:flex;flex-direction:column;justify-content:flex-start;align-items:center;text-align:center;font-size:12px;line-height:16px;white-space:nowrap;"><div><span style="display:inline-block;transform:scaleX(0.975);transform-origin:center">(дата составления акта)</span></div></div>
<div class="c" style="position:absolute;left:15px;top:380px;width:673px;height:41px;display:flex;flex-direction:column;justify-content:center;align-items:center;text-align:center;font-size:16px;line-height:21px;white-space:nowrap;"><div>Государственное бюджетное учреждение Республики Бурятия «Центр государственной<br>кадастровой оценки»</div></div>
<div class="c" style="position:absolute;left:15px;top:422px;width:673px;height:66px;display:flex;flex-direction:column;justify-content:flex-start;align-items:center;text-align:center;font-size:12px;line-height:16px;white-space:nowrap;"><div><span style="display:inline-block;transform:scaleX(0.982);transform-origin:center">(наименование бюджетного учреждения, созданного субъектом Российской Федерации и наделенного полномочиями, связанными с</span><br><span style="display:inline-block;transform:scaleX(0.973);transform-origin:center">определением кадастровой стоимости, составившего настоящий акт</span><br><span style="display:inline-block;transform:scaleX(0.982);transform-origin:center">(далее - бюджетное учреждение)</span></div></div>
<div class="c" style="position:absolute;left:15px;top:489px;width:673px;height:31px;display:flex;flex-direction:column;justify-content:center;align-items:center;text-align:center;font-size:16px;line-height:21px;white-space:nowrap;"><div>I. Количество объектов недвижимости, указанных в настоящем акте</div></div>
<div class="c" style="position:absolute;left:15px;top:521px;width:49px;height:70px;display:flex;flex-direction:column;justify-content:center;align-items:center;text-align:center;font-size:16px;line-height:21px;white-space:nowrap;"><div>1.1</div></div>
<div class="c" style="position:absolute;left:65px;top:520.5px;width:472px;height:70px;display:flex;flex-direction:column;justify-content:center;align-items:center;text-align:center;font-size:16px;line-height:21px;white-space:nowrap;"><div>Количество объектов недвижимости, указанных в настоящем акте,<br>кадастровая стоимость которых определена бюджетным<br>учреждением</div></div>
<div class="c" style="position:absolute;left:538px;top:521px;width:150px;height:70px;display:flex;flex-direction:column;justify-content:center;align-items:center;text-align:center;font-size:16px;line-height:21px;white-space:nowrap;"><div>116</div></div>
<div class="c" style="position:absolute;left:15px;top:592px;width:49px;height:93px;display:flex;flex-direction:column;justify-content:center;align-items:center;text-align:center;font-size:16px;line-height:21px;white-space:nowrap;"><div>1.2</div></div>
<div class="c" style="position:absolute;left:65px;top:591.5px;width:472px;height:93px;display:flex;flex-direction:column;justify-content:center;align-items:center;text-align:center;font-size:16px;line-height:21px;white-space:nowrap;"><div>Количество объектов недвижимости, указанных в настоящем акте,<br>изменение сведений Единого государственного реестра<br>недвижимости о которых не влечет за собой изменение их<br>кадастровой стоимости</div></div>
<div class="c" style="position:absolute;left:538px;top:592px;width:150px;height:93px;display:flex;flex-direction:column;justify-content:center;align-items:center;text-align:center;font-size:16px;line-height:21px;white-space:nowrap;"><div>66</div></div>
<div class="c" style="position:absolute;left:15px;top:686px;width:673px;height:31px;display:flex;flex-direction:column;justify-content:center;align-items:center;text-align:center;font-size:16px;line-height:21px;white-space:nowrap;"><div>II. Перечень объектов недвижимости, кадастровая стоимость которых определена</div></div>
<div class="c" style="position:absolute;left:15px;top:718px;width:49px;height:137px;display:flex;flex-direction:column;justify-content:center;align-items:center;text-align:center;font-size:16px;line-height:21px;white-space:nowrap;"><div>№<br>п/п</div></div>
<div class="c" style="position:absolute;left:65px;top:718px;width:164px;height:137px;display:flex;flex-direction:column;justify-content:center;align-items:center;text-align:center;font-size:16px;line-height:21px;white-space:nowrap;"><div>Кадастровый номер</div></div>
<div class="c" style="position:absolute;left:230px;top:718px;width:155px;height:137px;display:flex;flex-direction:column;justify-content:center;align-items:center;text-align:center;font-size:16px;line-height:21px;white-space:nowrap;"><div>Кадастровая<br>стоимость,<br>определенная<br>бюджетным<br>учреждением, руб.</div></div>
<div class="c" style="position:absolute;left:386px;top:718px;width:151px;height:137px;display:flex;flex-direction:column;justify-content:center;align-items:center;text-align:center;font-size:16px;line-height:21px;white-space:nowrap;"><div>Дата поступления<br>сведений для<br>определения<br>кадастровой<br>стоимости</div></div>
<div class="c" style="position:absolute;left:538px;top:718px;width:150px;height:137px;display:flex;flex-direction:column;justify-content:center;align-items:center;text-align:center;font-size:16px;line-height:21px;white-space:nowrap;"><div>Дата возникновения<br>основания для<br>определения<br>кадастровой<br>стоимости</div></div>
<div class="c" style="position:absolute;left:15px;top:856px;width:49px;height:20px;display:flex;flex-direction:column;justify-content:center;align-items:center;text-align:center;font-size:16px;line-height:21px;white-space:nowrap;"><div>1</div></div>
<div class="c" style="position:absolute;left:65px;top:856px;width:164px;height:20px;display:flex;flex-direction:column;justify-content:center;align-items:center;text-align:center;font-size:16px;line-height:21px;white-space:nowrap;"><div><span style="display:inline-block;transform:scaleX(0.952);transform-origin:center">03:01:260247:205</span></div></div>
<div class="c" style="position:absolute;left:230px;top:856px;width:155px;height:20px;display:flex;flex-direction:column;justify-content:center;align-items:center;text-align:center;font-size:16px;line-height:21px;white-space:nowrap;"><div>144 776,16</div></div>
<div class="c" style="position:absolute;left:386px;top:856px;width:151px;height:20px;display:flex;flex-direction:column;justify-content:center;align-items:center;text-align:center;font-size:16px;line-height:21px;white-space:nowrap;"><div>26.06.2024</div></div>
<div class="c" style="position:absolute;left:538px;top:856px;width:150px;height:20px;display:flex;flex-direction:column;justify-content:center;align-items:center;text-align:center;font-size:16px;line-height:21px;white-space:nowrap;"><div>24.06.2024</div></div>
<div class="c" style="position:absolute;left:15px;top:877px;width:49px;height:47px;display:flex;flex-direction:column;justify-content:center;align-items:center;text-align:center;font-size:16px;line-height:21px;white-space:nowrap;"><div>2</div></div>
<div class="c" style="position:absolute;left:65px;top:877px;width:164px;height:47px;display:flex;flex-direction:column;justify-content:center;align-items:center;text-align:center;font-size:16px;line-height:21px;white-space:nowrap;"><div><span style="display:inline-block;transform:scaleX(0.952);transform-origin:center">03:01:410103:593</span></div></div>
<div class="c" style="position:absolute;left:230px;top:877px;width:155px;height:47px;display:flex;flex-direction:column;justify-content:center;align-items:center;text-align:center;font-size:16px;line-height:21px;white-space:nowrap;"><div>75 172,24</div></div>
<div class="c" style="position:absolute;left:386px;top:877px;width:151px;height:47px;display:flex;flex-direction:column;justify-content:center;align-items:center;text-align:center;font-size:16px;line-height:21px;white-space:nowrap;"><div>26.06.2024</div></div>
<div class="c" style="position:absolute;left:538px;top:877px;width:150px;height:47px;display:flex;flex-direction:column;justify-content:center;align-items:center;text-align:center;font-size:16px;line-height:21px;white-space:nowrap;"><div>24.06.2024</div></div>
<div class="c" style="position:absolute;left:15px;top:925px;width:49px;height:20px;display:flex;flex-direction:column;justify-content:center;align-items:center;text-align:center;font-size:16px;line-height:21px;white-space:nowrap;"><div>3</div></div>
<div class="c" style="position:absolute;left:65px;top:925px;width:164px;height:20px;display:flex;flex-direction:column;justify-content:center;align-items:center;text-align:center;font-size:16px;line-height:21px;white-space:nowrap;"><div><span style="display:inline-block;transform:scaleX(0.952);transform-origin:center">03:01:410103:704</span></div></div>
<div class="c" style="position:absolute;left:230px;top:925px;width:155px;height:20px;display:flex;flex-direction:column;justify-content:center;align-items:center;text-align:center;font-size:16px;line-height:21px;white-space:nowrap;"><div>69 652,96</div></div>
<div class="c" style="position:absolute;left:386px;top:925px;width:151px;height:20px;display:flex;flex-direction:column;justify-content:center;align-items:center;text-align:center;font-size:16px;line-height:21px;white-space:nowrap;"><div>26.06.2024</div></div>
<div class="c" style="position:absolute;left:538px;top:925px;width:150px;height:20px;display:flex;flex-direction:column;justify-content:center;align-items:center;text-align:center;font-size:16px;line-height:21px;white-space:nowrap;"><div>24.06.2024</div></div>
<div style="position:absolute;left:13px;top:292px;width:673px;height:43px;border:2px solid #217346"></div>
<div style="position:absolute;left:685px;top:334px;width:5px;height:5px;background:#217346;border:1px solid #fff"></div>
</body></html>
